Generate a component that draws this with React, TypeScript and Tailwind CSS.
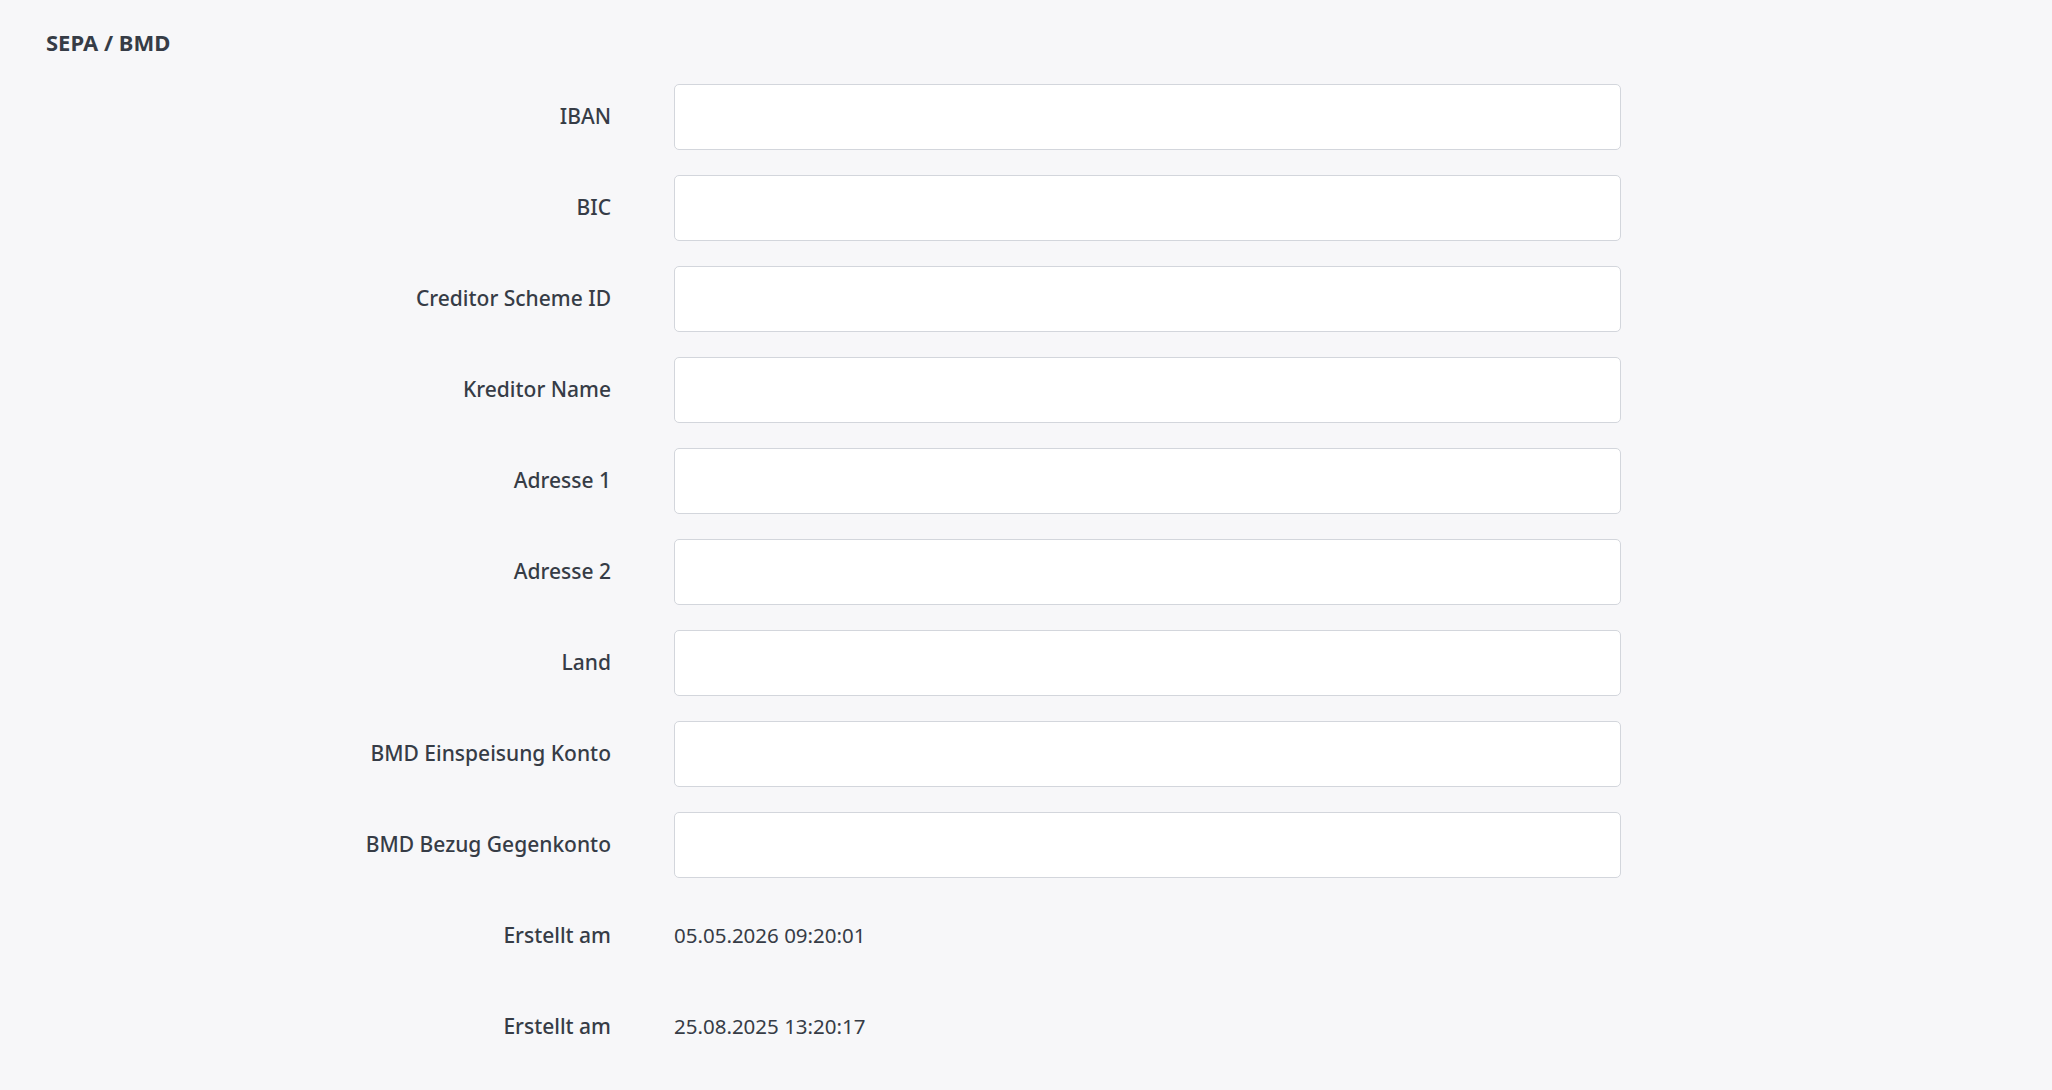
import React from 'react';

const fields = [
  'IBAN',
  'BIC',
  'Creditor Scheme ID',
  'Kreditor Name',
  'Adresse 1',
  'Adresse 2',
  'Land',
  'BMD Einspeisung Konto',
  'BMD Bezug Gegenkonto',
];

const stamps = [
  { label: 'Erstellt am', value: '05.05.2026 09:20:01' },
  { label: 'Erstellt am', value: '25.08.2025 13:20:17' },
];

const App: React.FC = () => {
  return (
    <div
      className="min-h-screen w-full bg-[#f7f7f9] text-[#363c46] pt-[28px]"
      style={{ fontFamily: '"Noto Sans", "Open Sans", sans-serif' }}
    >
      <h2 className="pl-[46px] h-[28px] leading-[28px] text-[22px] font-bold">SEPA / BMD</h2>

      <form className="mt-[15px] flex flex-col">
        {fields.map((name) => (
          <div key={name} className="flex items-center h-[91px]">
            <label className="w-[611px] text-right text-[21px] font-medium">{name}</label>
            <input
              type="text"
              className="ml-[63px] w-[947px] h-[66px] bg-white border border-[#d3d6dc] rounded-[5px] px-4 outline-none"
            />
          </div>
        ))}

        {stamps.map((s, i) => (
          <div key={i} className="flex items-center h-[91px]">
            <span className="w-[611px] text-right text-[21px] font-medium">{s.label}</span>
            <span className="ml-[63px] text-[20.5px]">{s.value}</span>
          </div>
        ))}
      </form>
    </div>
  );
};

export default App;
